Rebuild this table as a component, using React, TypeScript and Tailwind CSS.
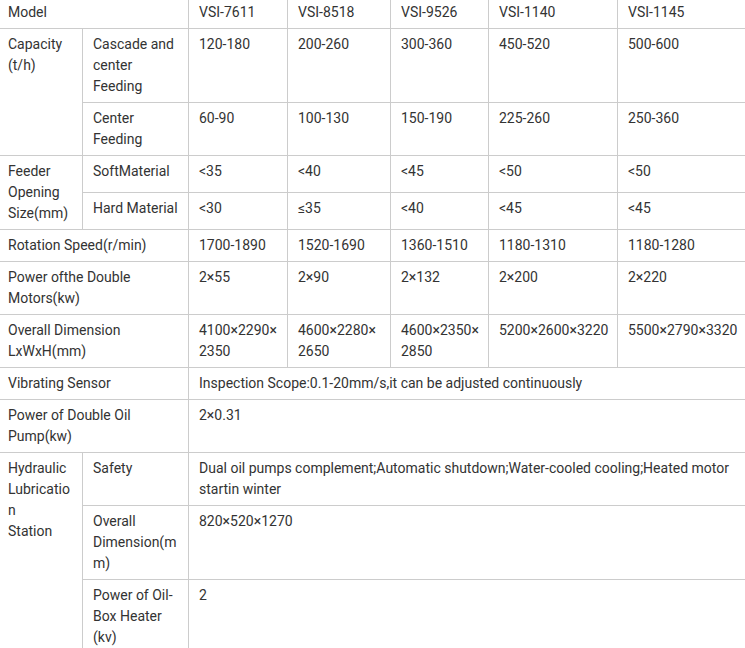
const models = ["VSI-7611", "VSI-8518", "VSI-9526", "VSI-1140", "VSI-1145"];

const cell = "border border-[#cccccc] pl-[10px] pr-[10px] py-[5px] align-top text-left font-normal break-words";
const valCell = "border border-[#cccccc] pl-[10px] pr-[4px] py-[5px] align-top text-left font-normal break-words";

function Vals({ items }: { items: React.ReactNode[] }) {
  return (
    <>
      {items.map((v, i) => (
        <td key={i} className={valCell}>
          {v}
        </td>
      ))}
    </>
  );
}

export default function App() {
  return (
    <div className="w-[745px] h-[648px] overflow-hidden bg-white">
      <table
        className="table-fixed border-collapse mt-[-4px] ml-[-3px] w-[760px] text-[14px] leading-[21px] text-[#333333]"
        style={{ fontFamily: "Roboto, 'Liberation Sans', sans-serif" }}
      >
        <colgroup>
          <col className="w-[85px]" />
          <col className="w-[106px]" />
          <col className="w-[99px]" />
          <col className="w-[103px]" />
          <col className="w-[98px]" />
          <col className="w-[129px]" />
          <col className="w-[140px]" />
        </colgroup>
        <tbody>
          <tr>
            <td className={cell} colSpan={2}>Model</td>
            <Vals items={models} />
          </tr>
          <tr>
            <td className={cell} rowSpan={2}>Capacity (t/h)</td>
            <td className={cell}>Cascade and center Feeding</td>
            <Vals items={["120-180", "200-260", "300-360", "450-520", "500-600"]} />
          </tr>
          <tr>
            <td className={cell}>Center Feeding</td>
            <Vals items={["60-90", "100-130", "150-190", "225-260", "250-360"]} />
          </tr>
          <tr>
            <td className={cell} rowSpan={2}>Feeder Opening Size(mm)</td>
            <td className={cell}>SoftMaterial</td>
            <Vals items={["<35", "<40", "<45", "<50", "<50"]} />
          </tr>
          <tr>
            <td className={cell}>Hard Material</td>
            <Vals items={["<30", "≤35", "<40", "<45", "<45"]} />
          </tr>
          <tr>
            <td className={cell} colSpan={2}>Rotation Speed(r/min)</td>
            <Vals items={["1700-1890", "1520-1690", "1360-1510", "1180-1310", "1180-1280"]} />
          </tr>
          <tr>
            <td className={cell} colSpan={2}>Power ofthe Double Motors(kw)</td>
            <Vals items={["2×55", "2×90", "2×132", "2×200", "2×220"]} />
          </tr>
          <tr>
            <td className={cell} colSpan={2}>Overall Dimension LxWxH(mm)</td>
            <Vals
              items={[
                "4100×2290×\u200B2350",
                "4600×2280×\u200B2650",
                "4600×2350×\u200B2850",
                "5200×2600×3220",
                "5500×2790×3320",
              ]}
            />
          </tr>
          <tr>
            <td className={cell} colSpan={2}>Vibrating Sensor</td>
            <td className={valCell} colSpan={5}>
              Inspection Scope:0.1-20mm/s,it can be adjusted continuously
            </td>
          </tr>
          <tr>
            <td className={cell} colSpan={2}>Power of Double Oil Pump(kw)</td>
            <td className={valCell} colSpan={5}>2×0.31</td>
          </tr>
          <tr>
            <td className={cell} rowSpan={3}>
              Hydraulic Lubrication
              <br />
              Station
            </td>
            <td className={cell}>Safety</td>
            <td className={valCell} colSpan={5}>
              Dual oil pumps complement;Automatic shutdown;Water-cooled cooling;Heated motor startin winter
            </td>
          </tr>
          <tr>
            <td className={cell}>Overall Dimension(mm)</td>
            <td className={valCell} colSpan={5}>820×520×1270</td>
          </tr>
          <tr>
            <td className={cell}>Power of Oil-Box Heater (kv)</td>
            <td className={valCell} colSpan={5}>2</td>
          </tr>
        </tbody>
      </table>
    </div>
  );
}
